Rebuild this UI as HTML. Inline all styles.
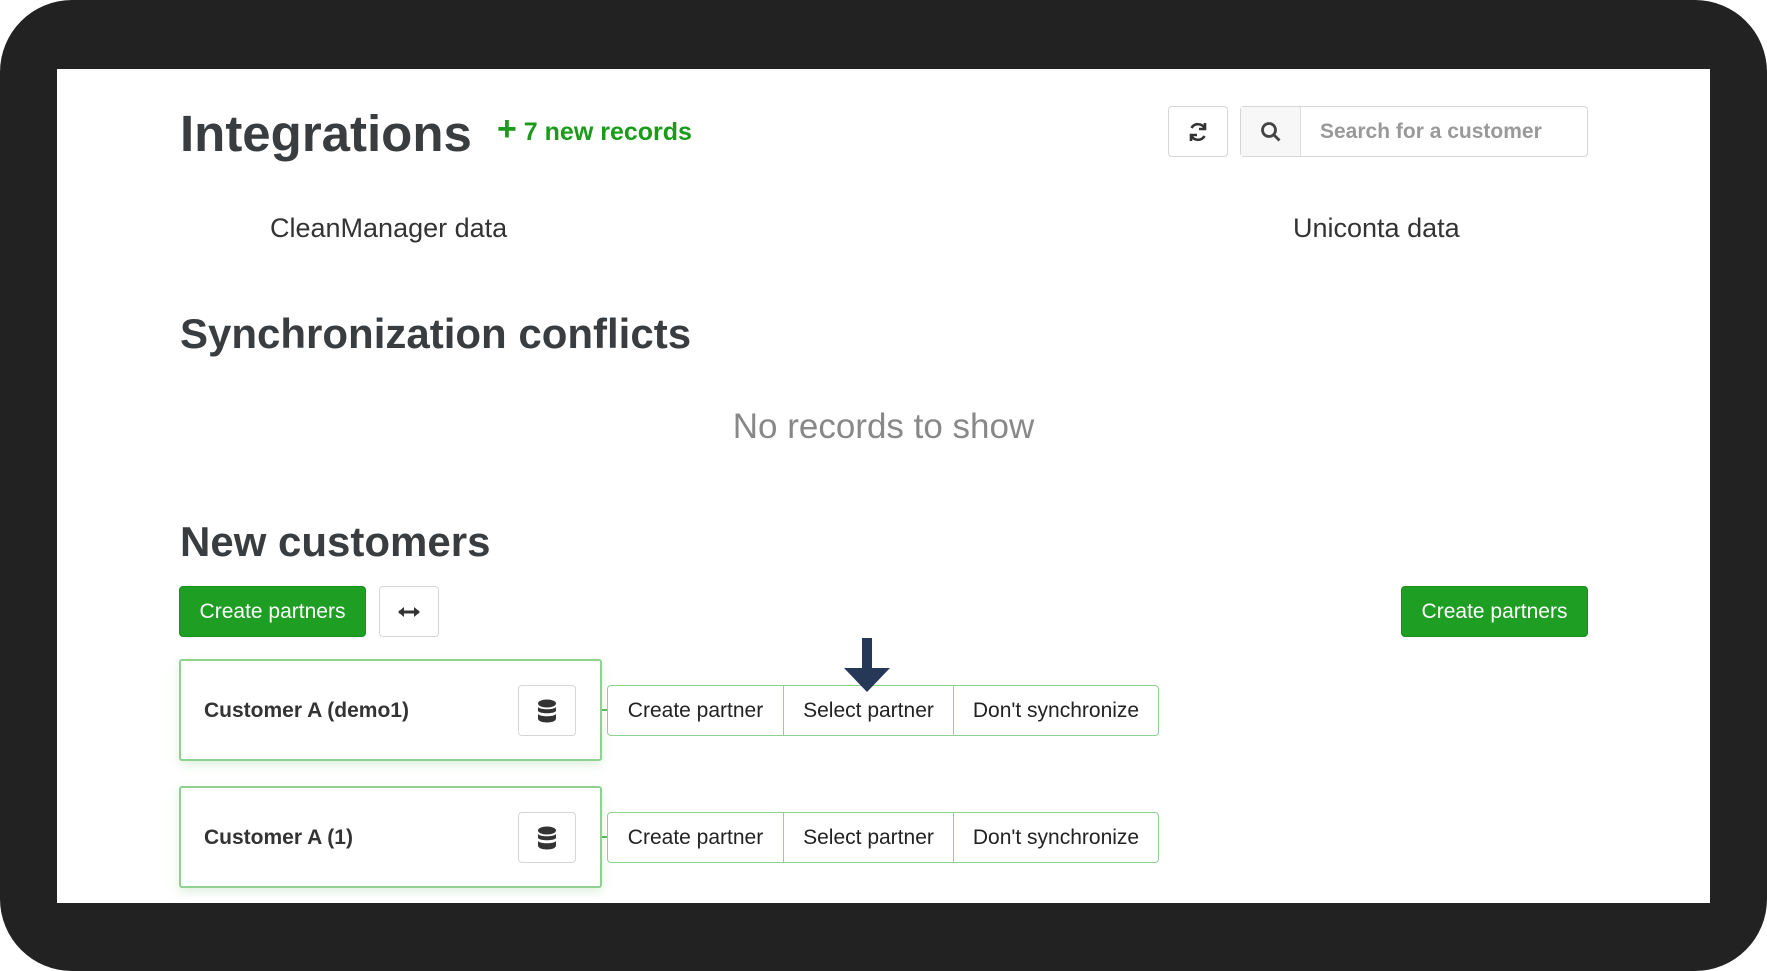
<!DOCTYPE html>
<html><head><style>
*{box-sizing:border-box;margin:0;padding:0}
body{width:1767px;height:971px;background:#fff;position:relative;overflow:hidden;font-family:"Liberation Sans",Arial,sans-serif;color:#333}
.frame{position:absolute;left:0;top:0;width:1767px;height:971px;background:#232222;border-radius:72px}
.screen{position:absolute;left:57px;top:69px;width:1653px;height:834px;background:#fff;overflow:hidden}
.a{position:absolute;white-space:nowrap}
.btn{position:absolute;border:1px solid #d6d6d6;border-radius:4px;background:#fff;display:flex;align-items:center;justify-content:center}
.green{background:#1e9e23;border-color:#1a8f1f;color:#fff;font-size:21px}
.card{position:absolute;left:122px;width:423px;height:102px;border:2px solid #8fd18f;border-radius:3px;box-shadow:0 4px 10px rgba(100,180,100,.2);background:#fff}
.card .t{position:absolute;left:23px;top:0;line-height:100px;font-weight:bold;font-size:21px;color:#333}
.card .db{position:absolute;left:337px;top:24px;width:58px;height:51px;border:1px solid #d6d6d6;border-radius:4px;display:flex;align-items:center;justify-content:center}
.grp{position:absolute;left:550px;width:552px;height:51px;border:1.5px solid #8fd18f;border-radius:4px;display:flex;font-size:21px;color:#222;background:#fff}
.grp div{display:flex;align-items:center;justify-content:center;border-right:1.5px solid #8fd18f}
.grp div:last-child{border-right:none}
.conn{position:absolute;left:545px;width:6px;height:2px;background:#5cb85c}
</style></head><body>
<div class="frame"></div>
<div class="screen">
<div class="a" style="left:123px;top:30px;font-size:51px;font-weight:bold;color:#3a3d40;line-height:70px">Integrations</div>
<div class="a" style="left:440px;top:40px;font-size:25px;font-weight:bold;color:#1a9c1a;line-height:40px"><span style="font-size:34px">+</span> 7 new records</div>
<div class="btn" style="left:1111px;top:37px;width:60px;height:51px">
<svg width="24" height="24" viewBox="0 0 24 24" fill="none" stroke="#333" stroke-width="2.6"><path d="M19 9a7.5 7.5 0 0 0-13.5-1"/><path d="M5 15a7.5 7.5 0 0 0 13.5 1"/><path d="M19 3v6h-6" fill="none"/><path d="M5 21v-6h6"/></svg></div>
<div class="btn" style="left:1183px;top:37px;width:348px;height:51px;justify-content:flex-start">
<div style="width:60px;height:49px;background:#f7f7f7;border-right:1px solid #ddd;display:flex;align-items:center;justify-content:center"><svg width="22" height="22" viewBox="0 0 22 22" fill="none" stroke="#444" stroke-width="2.8"><circle cx="9" cy="9" r="6.5"/><path d="M14 14l5.5 5.5"/></svg></div>
<div style="padding-left:19px;font-size:21px;font-weight:bold;color:#999">Search for a customer</div></div>
<div class="a" style="left:213px;top:140px;font-size:27px;line-height:38px;color:#333">CleanManager data</div>
<div class="a" style="left:1236px;top:140px;font-size:27px;line-height:38px;color:#333">Uniconta data</div>
<div class="a" style="left:123px;top:240px;font-size:42px;font-weight:bold;color:#3a3d40;line-height:50px">Synchronization conflicts</div>
<div class="a" style="left:0;width:1653px;text-align:center;top:336px;font-size:35px;color:#888;line-height:44px">No records to show</div>
<div class="a" style="left:123px;top:448px;font-size:42px;font-weight:bold;color:#3a3d40;line-height:50px">New customers</div>
<div class="btn green" style="left:122px;top:517px;width:187px;height:51px">Create partners</div>
<div class="btn" style="left:322px;top:517px;width:60px;height:51px"><svg width="22" height="12" viewBox="0 0 22 12"><path d="M1 6h20" stroke="#333" stroke-width="3"/><path d="M0 6l6-5v10zM22 6l-6-5v10z" fill="#333"/></svg></div>
<div class="btn green" style="left:1344px;top:517px;width:187px;height:51px">Create partners</div>

<div class="card" style="top:590px"><div class="t">Customer A (demo1)</div><div class="db"><svg width="20" height="24" viewBox="0 0 20 24" fill="#333"><ellipse cx="10" cy="4.5" rx="9" ry="4"/><path d="M1 8c2 3 16 3 18 0v4c-2 3-16 3-18 0z"/><path d="M1 15c2 3 16 3 18 0v4.5c0 2.5-4 4-9 4s-9-1.5-9-4z"/></svg></div></div>
<div class="conn" style="top:640px"></div>
<div class="grp" style="top:616px"><div style="width:176px">Create partner</div><div style="width:170px">Select partner</div><div style="flex:1">Don't synchronize</div></div>

<div class="card" style="top:717px"><div class="t">Customer A (1)</div><div class="db"><svg width="20" height="24" viewBox="0 0 20 24" fill="#333"><ellipse cx="10" cy="4.5" rx="9" ry="4"/><path d="M1 8c2 3 16 3 18 0v4c-2 3-16 3-18 0z"/><path d="M1 15c2 3 16 3 18 0v4.5c0 2.5-4 4-9 4s-9-1.5-9-4z"/></svg></div></div>
<div class="conn" style="top:767px"></div>
<div class="grp" style="top:743px"><div style="width:176px">Create partner</div><div style="width:170px">Select partner</div><div style="flex:1">Don't synchronize</div></div>

<svg class="a" style="left:787px;top:569px" width="46" height="55" viewBox="0 0 46 55"><path d="M18 0h10v30h18L23 54 0 30h18z" fill="#253858"/></svg>
</div>
</body></html>
